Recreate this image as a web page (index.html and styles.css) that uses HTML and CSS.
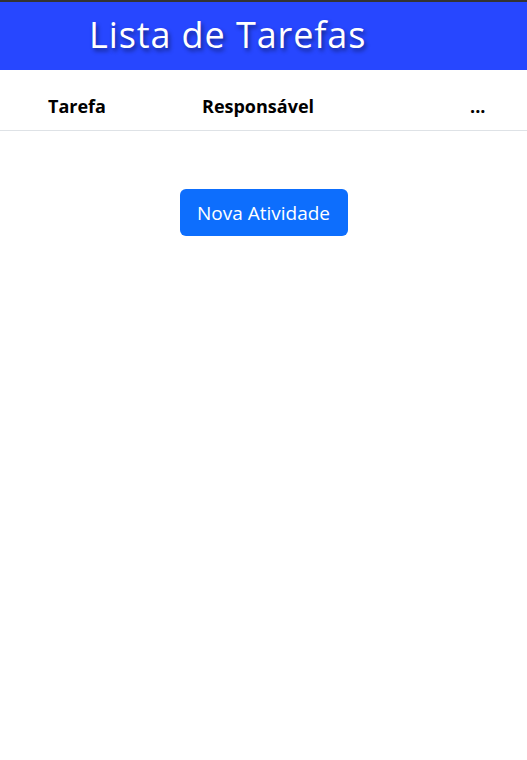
FILE: index.html
```html
<!DOCTYPE html>
<html lang="pt">
<head>
<meta charset="utf-8">
<link rel="stylesheet" href="styles.css">
</head>
<body>
<header class="topbar">
  <h1 class="title">Lista de Tarefas</h1>
</header>
<div class="thead">
  <div class="th">Tarefa</div>
  <div class="th">Responsável</div>
  <div class="th">...</div>
</div>
<div class="actions">
  <button class="btn">Nova Atividade</button>
</div>
</body>
</html>
```
FILE: styles.css
```css
html, body { margin: 0; padding: 0; background: #fff; }
body { font-family: "Open Sans", "Noto Sans", sans-serif; }
.topbar {
  box-sizing: border-box;
  border-top: 2px solid #333;
  background: #2747ff;
  height: 70px;
  display: flex;
  align-items: center;
  padding-left: 89px;
  padding-bottom: 4px;
}
.title {
  margin: 0;
  color: #fff;
  font-family: "Open Sans", sans-serif;
  font-weight: 400;
  font-size: 36px;
  letter-spacing: 0.9px;
  text-shadow: 2px 3px 4px rgba(0,0,0,0.45);
}
.thead {
  box-sizing: border-box;
  display: grid;
  grid-template-columns: 154px 268px auto;
  padding-left: 48px;
  padding-top: 12px;
  height: 61px;
  align-items: center;
  border-bottom: 1px solid #dee2e6;
}
.th {
  font-weight: 700;
  font-size: 18px;
  color: #000;
}
.actions {
  display: flex;
  justify-content: center;
  padding-top: 58px;
}
.btn {
  background: #0d6efd;
  color: #fff;
  border: 0;
  border-radius: 6px;
  font-family: "Open Sans", sans-serif;
  font-size: 19px;
  width: 168px;
  height: 47px;
  padding: 0;
}
```
